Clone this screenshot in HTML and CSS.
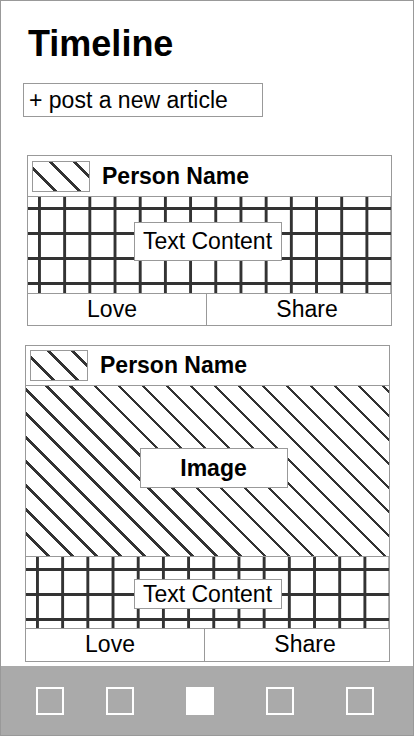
FILE: index.html
```html
<!DOCTYPE html>
<html lang="en">
<head>
  <meta charset="utf-8">
  <title>Timeline</title>
  <meta name="viewport" content="width=device-width, initial-scale=1.0">
  <link rel="stylesheet" href="styles.css">
</head>
<body>

<div id="screen">
  <div id="main">
    <h1 id="title">Timeline</h1>
    <button id="post">+ post a new article</button>

    <!-- text only post -->
    <div class="card">
      <div class="cardHead">
        <div class="avatar stripes"></div>
        <div class="name">Person Name</div>
      </div>
      <div class="grid gridTall">
        <div class="label textLabel">Text Content</div>
      </div>
      <div class="actions">
        <div class="act love">Love</div>
        <div class="act share">Share</div>
      </div>
    </div>

    <!-- post with picture -->
    <div class="card cardWide">
      <div class="cardHead">
        <div class="avatar stripes"></div>
        <div class="name">Person Name</div>
      </div>
      <div class="picture stripes">
        <div class="label imageLabel">Image</div>
      </div>
      <div class="grid gridShort">
        <div class="label textLabel small">Text Content</div>
      </div>
      <div class="actions">
        <div class="act love">Love</div>
        <div class="act share">Share</div>
      </div>
    </div>
  </div>

  <div id="nav">
    <div class="tab first"></div>
    <div class="tab"></div>
    <div class="tab active"></div>
    <div class="tab"></div>
    <div class="tab"></div>
  </div>
</div>

</body>
</html>
```

FILE: styles.css
```css
html, body {
  margin: 0;
  background: #fff;
  font-family: "Liberation Sans", Arial, sans-serif;
  color: #000;
}

#screen {
  width: 414px;
  height: 736px;
  box-sizing: border-box;
  border: 1px solid #999;
  display: flex;
  flex-direction: column;
}

#main {
  flex: 1;
}

#title {
  margin: 23px 0 0 27px;
  font-size: 36px;
  line-height: 40px;
  font-weight: bold;
}

#post {
  display: block;
  margin: 19px 0 0 22px;
  width: 240px;
  height: 34px;
  box-sizing: border-box;
  padding: 0 0 0 5px;
  border: 1px solid #999;
  background: #fff;
  text-align: left;
  font-family: "Liberation Sans", Arial, sans-serif;
  font-size: 23px;
  line-height: 30px;
  color: #000;
}

.card {
  margin: 38px 0 0 26px;
  width: 363px;
  border: 1px solid #999;
}

.cardWide {
  margin: 19px 0 0 24px;
}

.cardHead {
  height: 40px;
  border-bottom: 1px solid #999;
  display: flex;
  align-items: center;
  padding-left: 4px;
}

.cardWide .cardHead {
  height: 39px;
}

.avatar {
  width: 58px;
  height: 31px;
  box-sizing: border-box;
  border: 1px solid #999;
}

.name {
  margin-left: 12px;
  font-size: 23px;
  font-weight: bold;
}

.stripes {
  background-color: #fff;
  background-image: repeating-linear-gradient(45deg, #fff 0 14.6px, #333 14.6px 17px);
}

.grid {
  display: flex;
  align-items: center;
  justify-content: center;
  background-color: #fff;
  background-image: linear-gradient(to right, #333 3px, transparent 3px),
                    linear-gradient(to bottom, #333 3px, transparent 3px);
  background-size: 25.2px 25px;
  background-position: 10px 10px;
}

.gridTall {
  height: 96px;
}

.gridShort {
  height: 71px;
  background-position: 10px 11px;
}

.picture {
  height: 170px;
  border-bottom: 1px solid #999;
  display: flex;
  align-items: center;
  justify-content: center;
}

.label {
  box-sizing: border-box;
  width: 148px;
  border: 1px solid #999;
  background: #fff;
  text-align: center;
  font-size: 23px;
}

.textLabel {
  height: 39px;
  line-height: 37px;
  margin: 0 4px 8px 0;
}

.textLabel.small {
  height: 30px;
  line-height: 28px;
  margin: 2px 0 0 0;
}

.imageLabel {
  height: 40px;
  line-height: 38px;
  font-weight: bold;
  margin: 0 0 7px 12px;
}

.actions {
  display: flex;
  border-top: 1px solid #999;
  height: 31px;
}

.cardWide .actions {
  height: 32px;
}

.act {
  flex: 1;
  text-align: center;
  font-size: 23px;
  line-height: 30px;
}

.love {
  padding-right: 10px;
  border-right: 1px solid #999;
}

.share {
  padding-left: 16px;
}

#nav {
  height: 69px;
  background: #aaa;
  display: flex;
  align-items: center;
  gap: 52px;
  padding-left: 35px;
}

.tab {
  width: 28px;
  height: 28px;
  box-sizing: border-box;
  border: 2px solid #fff;
}

.tab.first {
  margin-right: -10px;
}

.tab.active {
  background: #fff;
}
```
